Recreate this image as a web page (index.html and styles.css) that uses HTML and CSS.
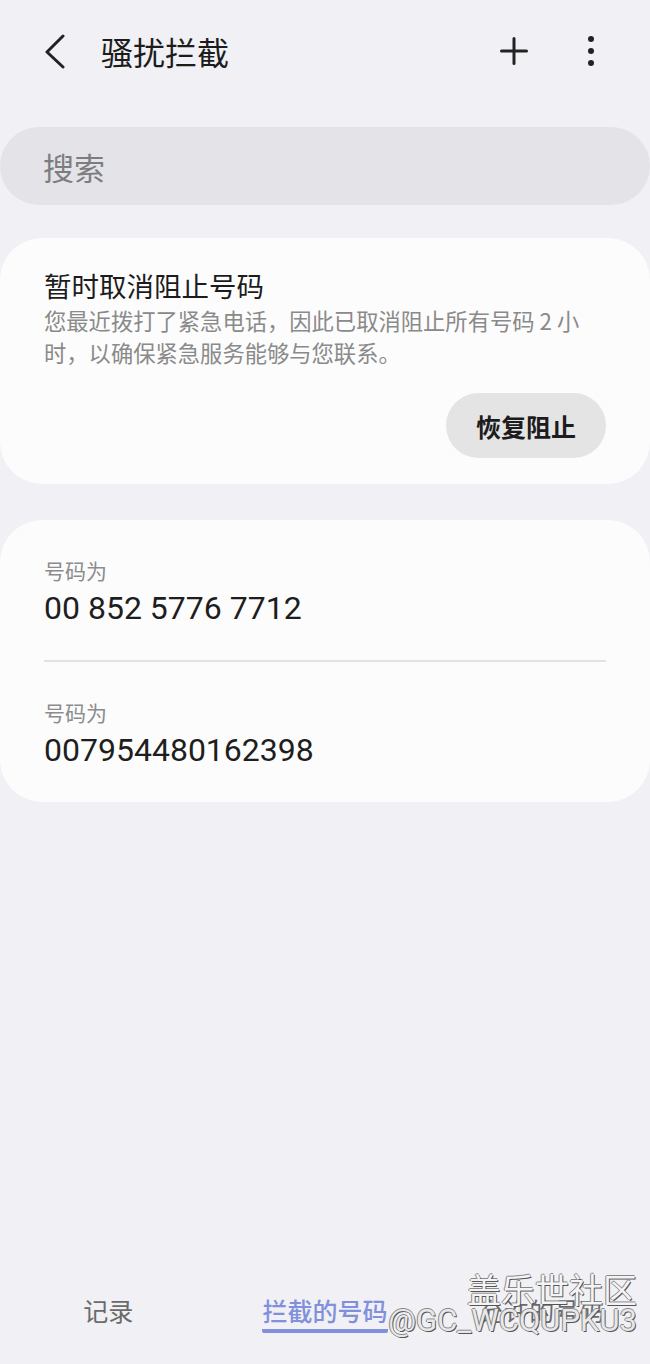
FILE: index.html
```html
<!DOCTYPE html>
<html lang="zh-CN">
<head>
<meta charset="utf-8">
<title>骚扰拦截</title>
<link rel="stylesheet" href="styles.css">
</head>
<body>
<div class="page">
  <header class="appbar">
    <svg class="back" width="30" height="36" viewBox="0 0 30 36"><polyline points="23,3 7,19 23,34" fill="none" stroke="#222" stroke-width="3" stroke-linecap="round" stroke-linejoin="round"/></svg>
    <h1 class="title">骚扰拦截</h1>
    <div class="actions">
      <svg class="plus" width="28" height="28" viewBox="0 0 28 28"><path d="M14 1.5V26.5M1.5 14H26.5" stroke="#222" stroke-width="3" stroke-linecap="round"/></svg>
      <svg class="more" width="12" height="32" viewBox="0 0 12 32"><circle cx="6" cy="4" r="3"/><circle cx="6" cy="16" r="3"/><circle cx="6" cy="28" r="3"/></svg>
    </div>
  </header>

  <div class="search">搜索</div>

  <section class="card notice">
    <h2 class="notice-title">暂时取消阻止号码</h2>
    <p class="notice-text">您最近拨打了紧急电话，因此已取消阻止所有号码 2 小时，以确保紧急服务能够与您联系。</p>
    <div class="notice-actions"><button class="resume">恢复阻止</button></div>
  </section>

  <section class="card list">
    <div class="item">
      <div class="label">号码为</div>
      <div class="number">00 852 5776 7712</div>
    </div>
    <div class="divider"></div>
    <div class="item">
      <div class="label">号码为</div>
      <div class="number">007954480162398</div>
    </div>
  </section>

  <nav class="tabs">
    <div class="tab">记录</div>
    <div class="tab active"><span>拦截的号码</span></div>
    <div class="tab">允许的号码</div>
  </nav>

  <div class="watermark">
    <div class="wm-title">盖乐世社区</div>
    <div class="wm-user">@GC_WCQUPKU3</div>
  </div>
</div>
</body>
</html>
```

FILE: styles.css
```css
* { box-sizing: border-box; margin: 0; padding: 0; }
html, body { background: #f0f0f5; }
body {
  font-family: Roboto, "Noto Sans CJK SC", sans-serif;
  color: #1c1c1c;
}
.page {
  position: relative;
  width: 650px;
  height: 1364px;
  display: flex;
  flex-direction: column;
  overflow: hidden;
}
.appbar {
  height: 102px;
  display: flex;
  align-items: center;
  padding: 0 53px 0 40px;
}
.back { display: block; }
.title {
  margin-left: 31px;
  font-size: 32px;
  font-weight: 400;
  line-height: 40px;
  color: #1c1c1c;
  font-family: "Noto Sans CJK SC", sans-serif;
}
.actions {
  margin-left: auto;
  display: flex;
  align-items: center;
  gap: 57px;
}
.plus, .more { display: block; }
.more { fill: #222; }

.search {
  margin-top: 25px;
  height: 78px;
  border-radius: 39px;
  background: #e3e3e8;
  padding-left: 43px;
  display: flex;
  align-items: center;
  font-family: "Noto Sans CJK SC", sans-serif;
  font-size: 31px;
  color: #7d7d80;
}

.card {
  background: #fcfcfc;
  border-radius: 42px;
}
.notice {
  margin-top: 33px;
  padding: 29px 44px 26px;
}
.notice-title {
  font-family: "Noto Sans CJK SC", sans-serif;
  font-size: 27.5px;
  font-weight: 400;
  line-height: 36px;
  color: #1c1c1c;
}
.notice-text {
  font-family: "Noto Sans CJK SC", sans-serif;
  font-size: 22.3px;
  line-height: 32px;
  color: #8a8a8a;
  margin-top: 1px;
}
.notice-actions {
  margin-top: 25px;
  display: flex;
  justify-content: flex-end;
}
.resume {
  width: 160px;
  height: 65px;
  border: none;
  border-radius: 33px;
  background: #e4e4e4;
  font-family: "Noto Sans CJK SC", sans-serif;
  font-size: 25px;
  font-weight: 700;
  color: #1c1c1c;
}

.list {
  margin-top: 36px;
  padding: 0 44px;
}
.item {
  padding: 35px 0 32px;
}
.label {
  font-family: "Noto Sans CJK SC", sans-serif;
  font-size: 21px;
  line-height: 30px;
  color: #8c8c8c;
}
.number {
  margin-top: 3px;
  font-family: Roboto, sans-serif;
  font-size: 32px;
  line-height: 40px;
  color: #1e1e1e;
}
.divider {
  height: 2px;
  background: #e2e2e2;
}

.tabs {
  margin-top: auto;
  height: 84px;
  display: grid;
  grid-template-columns: 1fr 1fr 1fr;
  padding-top: 14px;
}
.tab {
  display: flex;
  justify-content: center;
  align-items: flex-start;
  font-family: "Noto Sans CJK SC", sans-serif;
  font-size: 25px;
  line-height: 32px;
  color: #6a6a6a;
}
.tab.active { color: #8190dc; font-weight: 500; }
.tab.active span {
  display: block;
  padding-bottom: 3px;
  border-bottom: 4px solid #8190dc;
  border-radius: 0 0 2px 2px;
}

.watermark {
  position: absolute;
  right: 13px;
  bottom: 24px;
  text-align: right;
  font-family: "Noto Sans CJK SC", sans-serif;
  color: #f4f4f4;
  text-shadow: 1px 1px 0 #555, -1px 0 0 #888, 0 -1px 0 #888;
}
.wm-title {
  font-size: 34px;
  line-height: 38px;
}
.wm-user {
  font-family: Roboto, sans-serif;
  font-size: 31px;
  line-height: 38px;
  margin-top: -6px;
  color: #e8e8e8;
}
```
